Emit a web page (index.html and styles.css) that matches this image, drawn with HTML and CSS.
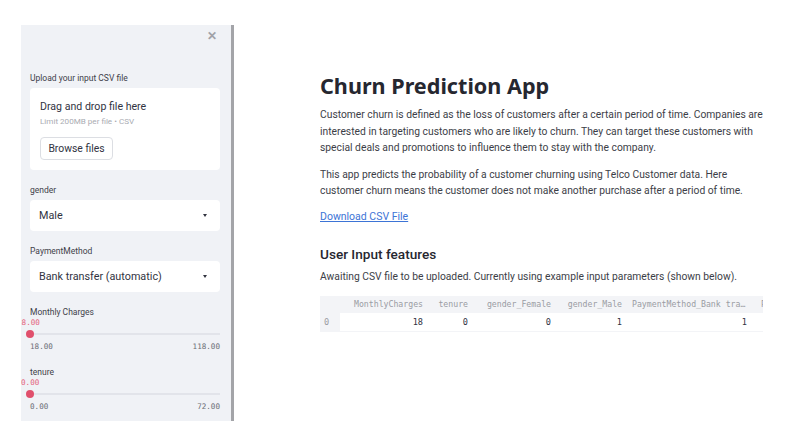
FILE: index.html
```html
<!DOCTYPE html>
<html lang="en">
<head>
  <meta charset="UTF-8" />
  <title>Churn Prediction App</title>
  <link rel="stylesheet" href="styles.css">
</head>
<body>
  <div class="app">
    <aside class="sidebar">
      <div class="close">&#x2715;</div>

      <label class="field-label first">Upload your input CSV file</label>
      <div class="uploader">
        <div class="drop-title">Drag and drop file here</div>
        <div class="drop-hint">Limit 200MB per file &bull; CSV</div>
        <button class="browse">Browse files</button>
      </div>

      <label class="field-label">gender</label>
      <div class="select">
        <span>Male</span>
        <span class="caret"></span>
      </div>

      <label class="field-label">PaymentMethod</label>
      <div class="select">
        <span>Bank transfer (automatic)</span>
        <span class="caret"></span>
      </div>

      <label class="field-label slider-label">Monthly Charges</label>
      <div class="slider-value value-monthly">18.00</div>
      <div class="slider"><div class="track"></div><div class="thumb"></div></div>
      <div class="slider-range"><span>18.00</span><span>118.00</span></div>

      <label class="field-label slider-label">tenure</label>
      <div class="slider-value value-tenure">0.00</div>
      <div class="slider"><div class="track"></div><div class="thumb"></div></div>
      <div class="slider-range"><span>0.00</span><span>72.00</span></div>
    </aside>

    <main class="content">
      <h1>Churn Prediction App</h1>
      <p class="intro">Customer churn is defined as the loss of customers after a certain period of time. Companies are interested in targeting customers who are likely to churn. They can target these customers with special deals and promotions to influence them to stay with the company.</p>
      <p class="intro second">This app predicts the probability of a customer churning using Telco Customer data. Here customer churn means the customer does not make another purchase after a period of time.</p>
      <a class="download" href="#">Download CSV File</a>

      <h3>User Input features</h3>
      <p class="note">Awaiting CSV file to be uploaded. Currently using example input parameters (shown below).</p>

      <div class="frame">
        <div class="row head">
          <div class="cell idx"></div>
          <div class="cell c1">MonthlyCharges</div>
          <div class="cell c2">tenure</div>
          <div class="cell c3">gender_Female</div>
          <div class="cell c4">gender_Male</div>
          <div class="cell c5">PaymentMethod_Bank transfer (automatic)</div>
          <div class="cell c6">PaymentMethod_Credit card (automatic)</div>
        </div>
        <div class="row body">
          <div class="cell idx">0</div>
          <div class="cell c1">18</div>
          <div class="cell c2">0</div>
          <div class="cell c3">0</div>
          <div class="cell c4">1</div>
          <div class="cell c5">1</div>
          <div class="cell c6"></div>
        </div>
      </div>
    </main>
  </div>
</body>
</html>
```

FILE: styles.css
```css
body {
  margin: 0;
  background-color: #fff;
  font-family: Roboto, "Noto Sans", sans-serif;
  color: #262730;
}
.app {
  display: flex;
  align-items: flex-start;
  padding: 25px 0 0 21px;
}
.sidebar {
  width: 190px;
  height: 396px;
  padding: 0 11px 0 9px;
  background-color: #f0f2f6;
  border-right: 3px solid #a3a4a8;
  overflow: hidden;
  flex-shrink: 0;
}
.close {
  height: 22px;
  line-height: 22px;
  text-align: right;
  padding-right: 3px;
  font-size: 12px;
  font-weight: bold;
  color: #a0a2a8;
}
.field-label {
  display: block;
  margin: 14px 0 4px;
  height: 12px;
  line-height: 12px;
  font-size: 8.5px;
  color: #3f414a;
}
.field-label.first {
  margin-top: 25px;
}
.field-label.slider-label {
  margin-bottom: 0;
}
.uploader {
  height: 82px;
  box-sizing: border-box;
  padding: 13px 10px 0;
  background-color: #fff;
  border-radius: 4px;
}
.drop-title {
  height: 12px;
  line-height: 12px;
  font-size: 10.6px;
  color: #31333f;
}
.drop-hint {
  margin-top: 3px;
  height: 10px;
  line-height: 10px;
  font-size: 8.1px;
  color: #a9abb2;
}
.browse {
  display: block;
  margin-top: 11px;
  width: 73px;
  height: 23px;
  padding: 0;
  border: 1px solid #dcdee3;
  border-radius: 4px;
  background-color: #fff;
  font-family: inherit;
  font-size: 10.4px;
  color: #31333f;
}
.select {
  display: flex;
  justify-content: space-between;
  align-items: center;
  height: 31px;
  padding: 0 13px 0 9px;
  background-color: #fff;
  border-radius: 4px;
  font-size: 10.8px;
  color: #31333f;
}
.caret {
  width: 0;
  height: 0;
  border-left: 2.5px solid transparent;
  border-right: 2.5px solid transparent;
  border-top: 3px solid #31333f;
}
.slider-value {
  height: 10px;
  line-height: 10px;
  font-family: "DejaVu Sans Mono", monospace;
  font-size: 7.6px;
  color: #e4627c;
}
.value-monthly {
  margin-left: -13px;
}
.value-tenure {
  margin-left: -9px;
}
.slider {
  position: relative;
  height: 12px;
}
.track {
  position: absolute;
  left: 0;
  right: 0;
  top: 5px;
  height: 2px;
  background-color: #e2e4ea;
}
.thumb {
  position: absolute;
  left: -4px;
  top: 2px;
  width: 8px;
  height: 8px;
  border-radius: 50%;
  background-color: #e0506c;
}
.slider-range {
  display: flex;
  justify-content: space-between;
  margin-top: 2px;
  height: 10px;
  line-height: 10px;
  font-family: "DejaVu Sans Mono", monospace;
  font-size: 7.6px;
  color: #6b6d75;
}
.content {
  width: 452px;
  margin-left: 86px;
  padding-top: 48px;
}
h1 {
  margin: 0;
  height: 26px;
  line-height: 26px;
  font-family: "Noto Sans", sans-serif;
  font-size: 21.6px;
  font-weight: 700;
  color: #262730;
}
.intro,
.note {
  margin: 8px 0 0;
  font-size: 10.3px;
  line-height: 16.5px;
  color: #3c3e47;
}
.intro.second {
  margin-top: 10px;
}
.download {
  display: block;
  margin-top: 9px;
  font-size: 10.5px;
  line-height: 16.5px;
  color: #3d74d6;
}
h3 {
  margin: 20px 0 0;
  height: 18px;
  line-height: 18px;
  font-size: 13.6px;
  font-weight: 500;
  color: #262730;
}
.note {
  margin-top: 6px;
}
.frame {
  width: 443px;
  margin-top: 10px;
  background-color: #f3f4f7;
  padding-bottom: 1px;
  overflow: hidden;
  font-family: "DejaVu Sans Mono", monospace;
  font-size: 8.2px;
}
.row {
  display: flex;
  white-space: nowrap;
}
.row.head {
  height: 17px;
  line-height: 17px;
  color: #9a9ca3;
}
.row.body {
  height: 18px;
  line-height: 18px;
  color: #31333f;
  font-size: 8.6px;
}
.cell {
  flex-shrink: 0;
  box-sizing: border-box;
  padding: 0 5px;
  text-align: right;
  overflow: hidden;
  text-overflow: ellipsis;
}
.row.body .cell {
  background-color: #fff;
}
.row.body .cell.idx {
  background-color: #f3f4f7;
  color: #9a9ca3;
  text-align: left;
  padding-left: 4px;
}
.idx { width: 20px; }
.c1 { width: 88px; }
.c2 { width: 45px; }
.c3 { width: 83px; }
.c4 { width: 71px; }
.c5 { width: 125px; }
.c6 { width: 125px; padding-left: 9px; text-align: left; }
```
